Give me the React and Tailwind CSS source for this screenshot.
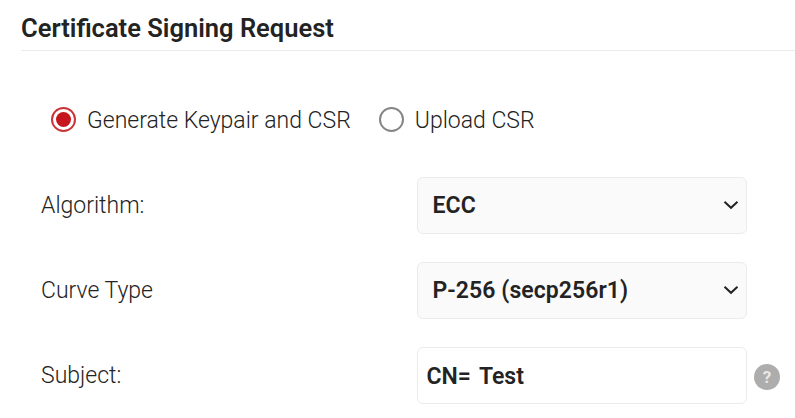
import { clsx } from 'clsx'

const selects = [
  { label: 'Algorithm:', value: 'ECC' },
  { label: 'Curve Type', value: 'P-256 (secp256r1)' },
]

function Radio({ label, checked }) {
  return (
    <label className="flex items-center gap-[11px]">
      <span
        className={clsx(
          'flex size-[25px] items-center justify-center rounded-full border-2',
          checked ? 'border-[#cb3338]' : 'border-[#858585]'
        )}
      >
        {checked && <span className="size-[15px] rounded-full bg-[#c4161c]" />}
      </span>
      <span className="-mb-[2px] pt-[2px] whitespace-nowrap">{label}</span>
    </label>
  )
}

function Row({ label, children }) {
  return (
    <div className="flex h-[57px] items-center">
      <div className="w-[376px] shrink-0 pt-px">{label}</div>
      {children}
    </div>
  )
}

function Chevron() {
  return (
    <svg className="mb-px" width="16" height="10" viewBox="0 0 16 10" fill="none" stroke="#232323" strokeWidth="2">
      <path d="M1.5 1.7 L8 7.8 L14.5 1.7" />
    </svg>
  )
}

export default function App() {
  return (
    <div className="h-[418px] w-[795px] overflow-hidden bg-white pl-[21px] font-['Roboto',sans-serif] text-[23px] leading-7 font-light text-[#232323]">
      <h2 className="h-[51px] border-b border-[#ebebeb] pt-[14px] text-[25.5px] font-semibold">
        Certificate Signing Request
      </h2>

      {/* Key source */}
      <div className="flex gap-[28px] pt-[54px] pl-[30px]">
        <Radio label="Generate Keypair and CSR" checked />
        <Radio label="Upload CSR" />
      </div>

      {/* Key settings */}
      <div className="flex flex-col gap-7 pt-[44px] pl-5">
        {selects.map(({ label, value }) => (
          <Row key={label} label={label}>
            <div className="flex h-[57px] w-[330px] items-center justify-between rounded-md border border-[#ebebeb] bg-[#fafafa] pr-[7px] pl-[14.5px] font-semibold">
              <span className="tracking-[0.08px]">{value}</span>
              <Chevron />
            </div>
          </Row>
        ))}

        <Row label="Subject:">
          <div className="flex h-[57px] w-[330px] items-center gap-[8px] rounded-md border border-[#ebebeb] bg-white pt-[2px] pl-[8.5px] font-semibold">
            <span>CN=</span>
            <span>Test</span>
          </div>
          <span className="mt-[3px] ml-[7px] flex size-[26px] items-center justify-center rounded-full bg-[#adadad] text-[17px] font-bold text-[#e8e8e8]">
            ?
          </span>
        </Row>
      </div>
    </div>
  )
}
